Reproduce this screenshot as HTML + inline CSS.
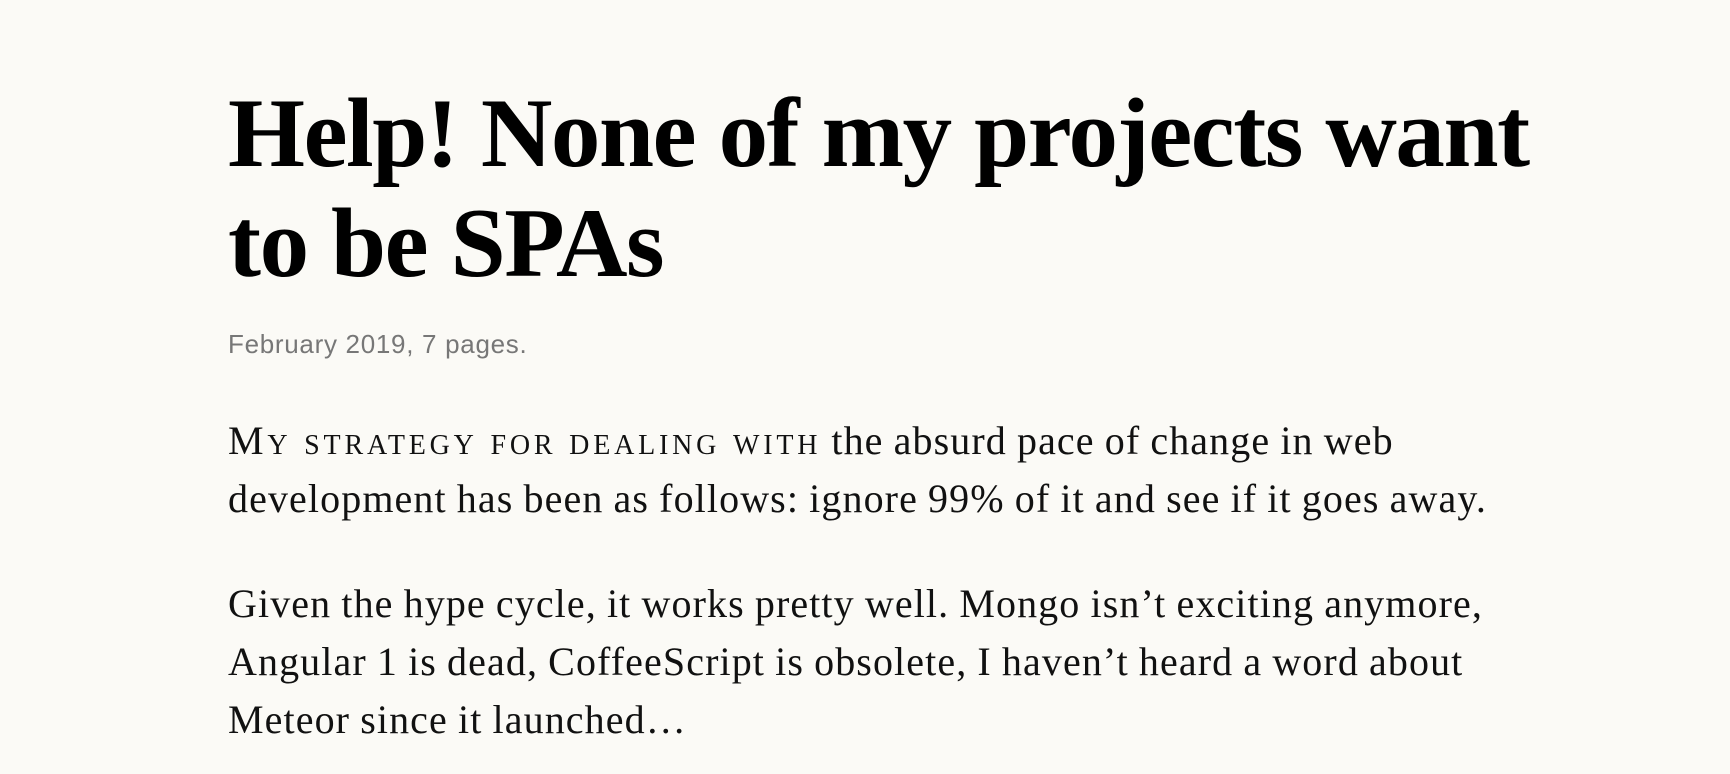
<!DOCTYPE html>
<html><head><meta charset="utf-8">
<style>
html,body{margin:0;padding:0;background:#fbfaf6;width:1730px;height:774px;overflow:hidden}
.w{position:absolute;left:228px;top:0;width:1450px}
h1{font-family:"Liberation Serif",serif;font-weight:bold;font-size:99px;line-height:110px;letter-spacing:-1.4px;margin:0;position:absolute;top:79px;left:0;white-space:nowrap;color:#000}
.m{font-family:"Liberation Sans",sans-serif;font-size:26px;color:#777;position:absolute;top:329px;left:0;white-space:nowrap;letter-spacing:0.7px}
p{font-family:"Liberation Serif",serif;font-size:40px;line-height:58px;margin:0;position:absolute;left:0;white-space:nowrap;color:#111;letter-spacing:1.1px;word-spacing:-1px}
.sc{font-variant:small-caps;letter-spacing:3.8px}
</style></head><body>
<div class="w">
<h1>Help! None of my projects want<br>to be SPAs</h1>
<div class="m">February 2019, 7 pages.</div>
<p style="top:412px"><span class="sc">My strategy for dealing with</span> the absurd pace of change in web<br>development has been as follows: ignore 99% of it and see if it goes away.</p>
<p style="top:575px">Given the hype cycle, it works pretty well. Mongo isn’t exciting anymore,<br>Angular 1 is dead, CoffeeScript is obsolete, I haven’t heard a word about<br>Meteor since it launched…</p>
</div>
</body></html>
